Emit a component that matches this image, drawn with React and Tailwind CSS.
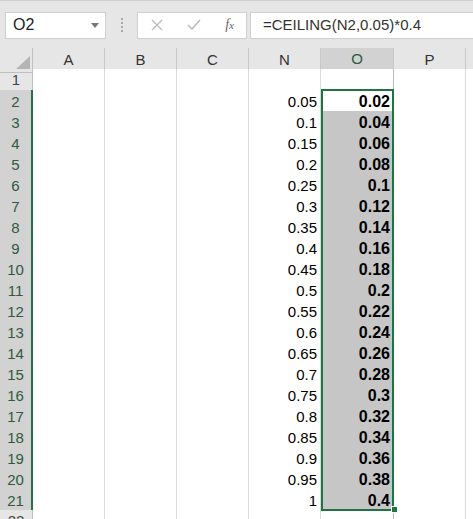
import React from "react";

const N = ["0.05","0.1","0.15","0.2","0.25","0.3","0.35","0.4","0.45","0.5","0.55","0.6","0.65","0.7","0.75","0.8","0.85","0.9","0.95","1"];
const O = ["0.02","0.04","0.06","0.08","0.1","0.12","0.14","0.16","0.18","0.2","0.22","0.24","0.26","0.28","0.3","0.32","0.34","0.36","0.38","0.4"];

const cols = ["A", "B", "C", "N", "O", "P"];
const gridCols = "grid grid-cols-[33px_72px_72px_72px_72px_73px_72px_1fr]";

function Row({ n }) {
  const sel = n >= 2 && n <= 21;
  const nv = n >= 2 && n <= 21 ? N[n - 2] : "";
  const ov = n >= 2 && n <= 21 ? O[n - 2] : "";
  const shade = n >= 3 && n <= 21;
  return (
    <div className={gridCols + " h-[21px]"}>
      <div
        className={
          "flex items-center justify-center border-b border-[#c8c8c8] text-[15px] " +
          (sel
            ? "bg-[#d2d2d2] text-[#2e5a3f] border-r-2 border-r-[#217346]"
            : "bg-[#e6e6e6] text-[#444] border-r border-r-[#c0c0c0]")
        }
      >
        {n}
      </div>
      <div className="border-b border-r border-[#d9d9d9] bg-white" />
      <div className="border-b border-r border-[#d9d9d9] bg-white" />
      <div className="border-b border-r border-[#d9d9d9] bg-white" />
      <div className="flex items-center justify-end pr-[3px] border-b border-r border-[#d9d9d9] bg-white text-[15px] text-black">
        {nv}
      </div>
      <div
        className={
          "flex items-center justify-end pr-[3px] border-b border-r border-[#bcbcbc] text-[16px] font-bold text-black " +
          (shade ? "bg-[#c6c6c6]" : "bg-white")
        }
      >
        {ov}
      </div>
      <div className="border-b border-r border-[#d9d9d9] bg-white" />
      <div className="border-b border-[#d9d9d9] bg-white" />
    </div>
  );
}

export default function App() {
  const rows = Array.from({ length: 22 }, (_, i) => i + 1);
  return (
    <div className="w-[473px] h-[519px] overflow-hidden bg-white font-['Liberation_Sans',Arial,sans-serif] select-none">
      {/* formula bar */}
      <div className="h-[48px] bg-[#e6e6e6] border-t border-[#d0d0d0] flex items-center pl-[5px] pt-[1px]">
        <div className="w-[101px] h-[27px] bg-white border border-[#d0d0d0] flex items-center justify-between pl-[7px] pr-[6px] text-[16px] text-[#222]">
          <span>O2</span>
          <svg width="8" height="5" viewBox="0 0 8 5">
            <path d="M0 0 L8 0 L4 5 Z" fill="#777" />
          </svg>
        </div>
        <div className="w-[31px] flex flex-col items-center gap-[2px]">
          <span className="w-[2px] h-[2px] bg-[#aaa]" />
          <span className="w-[2px] h-[2px] bg-[#aaa]" />
          <span className="w-[2px] h-[2px] bg-[#aaa]" />
          <span className="w-[2px] h-[2px] bg-[#aaa]" />
        </div>
        <div className="w-[110px] h-[27px] bg-white border border-[#d0d0d0] flex items-center justify-between pl-[13px] pr-[12px]">
          <svg width="12" height="12" viewBox="0 0 12 12">
            <path d="M1 1 L11 11 M11 1 L1 11" stroke="#bdbdbd" strokeWidth="1.4" />
          </svg>
          <svg width="14" height="12" viewBox="0 0 14 12">
            <path d="M1 6 L5 10 L13 1" stroke="#bdbdbd" strokeWidth="1.6" fill="none" />
          </svg>
          <span className="italic text-[14px] text-[#666] font-['Liberation_Serif',serif] leading-none">
            f<span className="text-[11px]">x</span>
          </span>
        </div>
        <div className="ml-[3px] flex-1 h-[27px] bg-white border border-r-0 border-[#d0d0d0] flex items-center pl-[12px] text-[15px] text-[#333]">
          =CEILING(N2,0.05)*0.4
        </div>
      </div>

      {/* sheet */}
      <div className="relative">
        <div className={gridCols + " h-[21px] bg-[#e6e6e6]"}>
          <div className="relative border-r border-b border-[#c0c0c0]">
            <svg className="absolute right-[2px] bottom-[3px]" width="14" height="13" viewBox="0 0 14 13">
              <path d="M14 0 L14 13 L0 13 Z" fill="#b5b5b5" />
            </svg>
          </div>
          {cols.map((c) => (
            <div
              key={c}
              className={
                "flex items-center justify-center text-[15px] border-r border-[#c8c8c8] " +
                (c === "O"
                  ? "bg-[#d2d2d2] text-[#2e5a3f] border-b-2 border-b-[#217346]"
                  : "text-[#333] border-b border-b-[#c0c0c0]")
              }
            >
              {c}
            </div>
          ))}
          <div className="border-b border-[#c0c0c0]" />
        </div>
        {rows.map((n) => (
          <Row key={n} n={n} />
        ))}
        {/* selection border */}
        <div className="absolute left-[321px] top-[41px] w-[73px] h-[422px] border-2 border-[#217346] pointer-events-none" />
        <div className="absolute left-[391px] top-[458px] w-[7px] h-[7px] bg-[#217346] border border-white" />
      </div>
    </div>
  );
}
